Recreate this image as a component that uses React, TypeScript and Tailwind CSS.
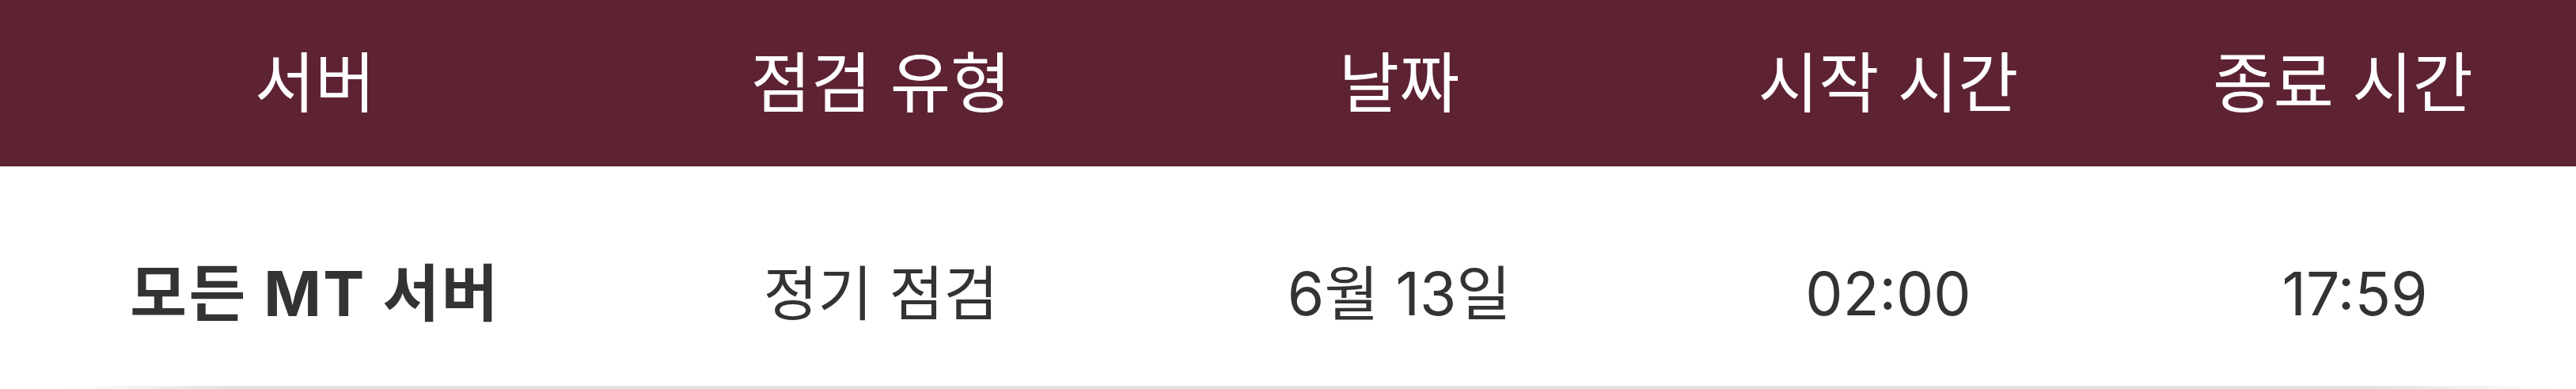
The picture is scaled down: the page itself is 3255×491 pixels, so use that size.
import React from 'react';

const columns = ['서버', '점검 유형', '날짜', '시작 시간', '종료 시간'];

const rows = [
  { server: '모든 MT 서버', type: '정기 점검', date: '6월 13일', start: '02:00', end: '17:59' },
];

export default function App() {
  return (
    <div className="w-[3255px] bg-white font-['Inter','Noto_Sans_CJK_KR',sans-serif]">
      <div className="grid grid-cols-[796px_634px_676px_560px_1fr] h-[210px] bg-[#5d2333] text-white text-[83px] items-center">
        {columns.map((col) => (
          <div key={col} className="text-center leading-none">
            {col}
          </div>
        ))}
      </div>

      {rows.map((row) => (
        <div
          key={row.server}
          className="grid grid-cols-[796px_634px_676px_560px_1fr] h-[277px] pt-[44px] items-center text-[75px] text-[#333333]"
        >
          <div className="text-center font-bold leading-none tracking-[0.03em] text-[78px]">{row.server}</div>
          <div className="text-center leading-none">{row.type}</div>
          <div className="text-center leading-none">{row.date}</div>
          <div className="text-center leading-none">{row.start}</div>
          <div className="text-center leading-none pl-[30px]">{row.end}</div>
        </div>
      ))}

      <div className="h-[4px] bg-[linear-gradient(to_right,transparent_2.5%,#e2e2e2_9%,#e2e2e2_92%,transparent_99%)]" />
    </div>
  );
}
